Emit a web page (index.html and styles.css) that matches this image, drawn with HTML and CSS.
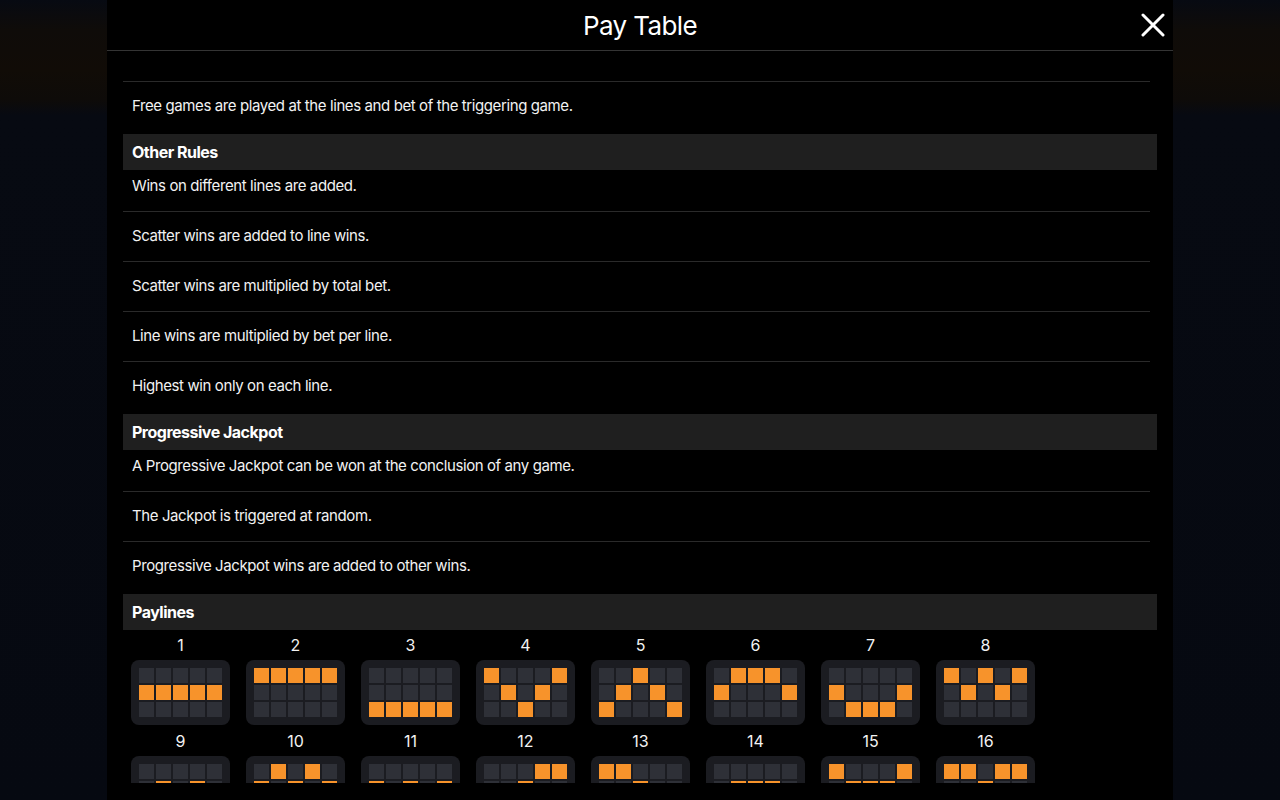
FILE: index.html
```html
<!DOCTYPE html>
<html lang="en">
<head>
  <meta charset="UTF-8" />
  <title>Pay Table</title>
  <meta name="viewport" content="width=device-width, initial-scale=1" />
  <link rel="stylesheet" href="styles.css">
</head>
<body>

  <div class="modal">
    <div class="modal-head">
      <span></span>
      <h1>Pay Table</h1>
      <button class="close" aria-label="Close">
        <svg width="24" height="24" viewBox="0 0 24 24">
          <path d="M2 2 L22 22 M22 2 L2 22" stroke="#fff" stroke-width="3" stroke-linecap="round" />
        </svg>
      </button>
    </div>

    <div class="modal-body">
      <div class="rule rule-cut"></div>
      <p class="rule last">Free games are played at the lines and bet of the triggering game.</p>

      <h2 class="section">Other Rules</h2>
      <p class="rule first">Wins on different lines are added.</p>
      <p class="rule">Scatter wins are added to line wins.</p>
      <p class="rule">Scatter wins are multiplied by total bet.</p>
      <p class="rule">Line wins are multiplied by bet per line.</p>
      <p class="rule last">Highest win only on each line.</p>

      <h2 class="section">Progressive Jackpot</h2>
      <p class="rule first">A Progressive Jackpot can be won at the conclusion of any game.</p>
      <p class="rule">The Jackpot is triggered at random.</p>
      <p class="rule last">Progressive Jackpot wins are added to other wins.</p>

      <h2 class="section">Paylines</h2>
      <div class="paylines" id="paylines"></div>
    </div>
  </div>

  <script>
    // row index (0 = top) of the winning cell on each reel
    const lines = [
      [1,1,1,1,1], [0,0,0,0,0], [2,2,2,2,2], [0,1,2,1,0],
      [2,1,0,1,2], [1,0,0,0,1], [1,2,2,2,1], [0,1,0,1,0],
      [2,1,2,1,2], [1,0,1,0,1], [1,2,1,2,1], [2,2,1,0,0],
      [0,0,1,2,2], [2,1,1,1,2], [0,1,1,1,0], [0,0,1,0,0]
    ];

    const box = document.getElementById('paylines');
    lines.forEach((line, i) => {
      let cells = '';
      for (let r = 0; r < 3; r++) {
        for (let c = 0; c < 5; c++) {
          cells += '<i class="' + (line[c] === r ? 'on' : '') + '"></i>';
        }
      }
      box.innerHTML += '<div class="payline"><span>' + (i + 1) + '</span><div class="reels">' + cells + '</div></div>';
    });
  </script>

</body>
</html>
```

FILE: styles.css
```css
body {
  margin: 0;
  height: 100vh;
  overflow: hidden;
  font-family: Inter, 'Noto Sans', sans-serif;
  color: #f2f2f2;
  background:
    linear-gradient(180deg, #070a12 0, #0f0c09 30px, #110c07 70px, #0e0b09 100px, #070a12 115px, #060911 100%);
}
.modal {
  width: 1066px;
  height: 100vh;
  margin: 0 auto;
  background: #000;
  display: flex;
  flex-direction: column;
}
.modal-head {
  height: 50px;
  flex: none;
  border-bottom: 1px solid #343434;
  display: grid;
  grid-template-columns: 1fr auto 1fr;
  align-items: center;
}
.modal-head h1 {
  margin: 0;
  font-size: 26px;
  font-weight: 400;
  letter-spacing: -0.6px;
  color: #fff;
}
.close {
  justify-self: end;
  margin-right: 8px;
  width: 24px;
  height: 24px;
  padding: 0;
  border: none;
  background: none;
  cursor: pointer;
  display: flex;
}
.modal-body {
  flex: 1;
  min-height: 0;
  overflow: hidden;
  margin-bottom: 17px;
  padding: 0 16px;
}
.rule {
  margin: 0 7px 0 0;
  padding: 14px 9px 15px;
  font-size: 15px;
  line-height: 20px;
  letter-spacing: -0.4px;
  border-bottom: 1px solid #2a2a2a;
}
.rule-cut {
  height: 31px;
  padding: 0;
  box-sizing: border-box;
}
.rule.first {
  padding-top: 6px;
}
.rule.last {
  border-bottom: none;
  padding-bottom: 18px;
}
.section {
  margin: 0;
  height: 36px;
  line-height: 36px;
  padding: 0 9px;
  background: #1f1f1f;
  font-size: 16px;
  font-weight: 700;
  letter-spacing: -0.5px;
  color: #fff;
}
.paylines {
  display: grid;
  grid-template-columns: repeat(8, 99px);
  column-gap: 16px;
  row-gap: 6px;
  padding: 5px 8px;
}
.payline {
  display: flex;
  flex-direction: column;
  align-items: center;
  gap: 5px;
}
.payline span {
  font-size: 16px;
  line-height: 20px;
}
.reels {
  width: 83px;
  padding: 8px;
  border-radius: 8px;
  background: #1b1c21;
  display: grid;
  grid-template-columns: repeat(5, 15px);
  grid-auto-rows: 15px;
  gap: 2px;
}
.reels i {
  background: #2e3037;
}
.reels i.on {
  background: #f7932b;
}
```
